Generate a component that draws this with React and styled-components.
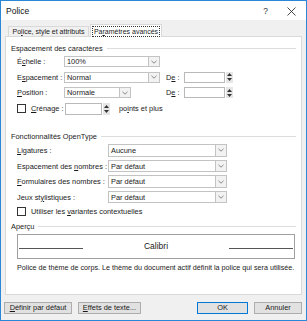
import React from "react";
import styled, { createGlobalStyle } from "styled-components";

const Global = createGlobalStyle`
  html, body { margin: 0; padding: 0; background: #ffffff; }
  * { box-sizing: border-box; }
`;

export default function App() {
  return (
    <>
      <Global />
      <Window>
        <TitleBar>
          <Title>Police</Title>
          <TitleBtns>
            <Help>?</Help>
            <svg width="9" height="9" viewBox="0 0 9 9">
              <path d="M0.5 0.5L8.5 8.5M8.5 0.5L0.5 8.5" stroke="#333" strokeWidth="0.9" />
            </svg>
          </TitleBtns>
        </TitleBar>

        <Tabs>
          <Tab $w={81}>Po<u>l</u>ice, style et attributs</Tab>
          <Tab $w={72} $active>
            <Focus>Pa<u>r</u>amètres avancés</Focus>
          </Tab>
        </Tabs>

        <Panel>
          <Group>Espacement des caractères</Group>
          <Rows $gap={4.6}>
            <Row>
              <Label $w={47}>É<u>c</u>helle :</Label>
              <Combo $w={96}>100%</Combo>
            </Row>
            <Row>
              <Label $w={47}>E<u>s</u>pacement :</Label>
              <Combo $w={96}>Normal</Combo>
              <SideLabel>D<u>e</u> :</SideLabel>
              <Spin $w={49} />
            </Row>
            <Row>
              <Label $w={47}><u>P</u>osition :</Label>
              <Combo $w={67}>Normale</Combo>
              <SideLabel $ml={35}>D<u>e</u> :</SideLabel>
              <Spin $w={49} />
            </Row>
            <Row $h={12}>
              <Check />
              <Label $w={34}><u>C</u>rénage :</Label>
              <Spin $w={45} $h={12} />
              <Text $ml={9}>po<u>i</u>nts et plus</Text>
            </Row>
          </Rows>

          <Group $mt={16.5}>Fonctionnalités OpenType</Group>
          <Rows $gap={3.3}>
            <Row $h={12.3}>
              <Label $w={91}><u>L</u>igatures :</Label>
              <Combo $w={119} $h={12.3}>Aucune</Combo>
            </Row>
            <Row $h={12.3}>
              <Label $w={91}>Espacement des <u>n</u>ombres :</Label>
              <Combo $w={119} $h={12.3}>Par défaut</Combo>
            </Row>
            <Row $h={12.3}>
              <Label $w={91}><u>F</u>ormulaires des nombres :</Label>
              <Combo $w={119} $h={12.3}>Par défaut</Combo>
            </Row>
            <Row $h={12.3}>
              <Label $w={91}>Jeux st<u>y</u>listiques :</Label>
              <Combo $w={119} $h={12.3}>Par défaut</Combo>
            </Row>
            <Row $h={11} $mt={-1}>
              <Check />
              <Text>Utiliser les <u>v</u>ariantes contextuelles</Text>
            </Row>
          </Rows>

          <Group $mt={5}>Aperçu</Group>
          <Preview>
            <Baseline />
            <PreviewText>Calibri</PreviewText>
            <Baseline />
          </Preview>
          <Note>Police de thème de corps. Le thème du document actif définit la police qui sera utilisée.</Note>
        </Panel>

        <Footer>
          <Button $w={68}><u>D</u>éfinir par défaut</Button>
          <Button $w={63}><u>E</u>ffets de texte...</Button>
          <Spacer />
          <Button $w={51} $primary>OK</Button>
          <Button $w={48}>Annuler</Button>
        </Footer>
      </Window>
    </>
  );
}

function Combo({ $w, $h, children }) {
  return (
    <ComboBox $w={$w} $h={$h}>
      <ComboValue>{children}</ComboValue>
      <Drop>
        <svg width="6" height="4" viewBox="0 0 6 4">
          <path d="M0.5 0.8L3 3.2L5.5 0.8" fill="none" stroke="#6d6d6d" strokeWidth="0.8" />
        </svg>
      </Drop>
    </ComboBox>
  );
}

function Spin({ $w, $h }) {
  return (
    <SpinBox $w={$w} $h={$h}>
      <SpinField />
      <Arrows>
        <svg width="5" height="3" viewBox="0 0 5 3"><path d="M0 3L2.5 0L5 3Z" fill="#333" /></svg>
        <svg width="5" height="3" viewBox="0 0 5 3"><path d="M0 0L2.5 3L5 0Z" fill="#333" /></svg>
      </Arrows>
    </SpinBox>
  );
}

const Window = styled.div`
  width: 307px;
  height: 321px;
  border: 1px solid #2b88d8;
  background: #f0f0f0;
  display: flex;
  flex-direction: column;
  font-family: "Liberation Sans", Arial, sans-serif;
  font-size: 7.4px;
  color: #1a1a1a;
  overflow: hidden;
`;

const TitleBar = styled.div`
  height: 19px;
  flex-shrink: 0;
  background: #ffffff;
  display: flex;
  align-items: center;
  justify-content: space-between;
  padding: 1px 10px 0 5px;
`;

const Title = styled.div`
  font-size: 8.5px;
  color: #111;
`;

const TitleBtns = styled.div`
  display: flex;
  align-items: center;
  gap: 19px;
`;

const Help = styled.span`
  font-size: 8.5px;
  color: #333;
`;

const Tabs = styled.div`
  display: flex;
  align-items: flex-end;
  padding: 5px 0 0 7px;
  height: 17px;
  flex-shrink: 0;
  position: relative;
  z-index: 1;
  font-size: 7px;
`;

const Tab = styled.div`
  width: ${p => p.$w}px;
  height: ${p => (p.$active ? "13px" : "11px")};
  display: flex;
  align-items: center;
  justify-content: center;
  background: ${p => (p.$active ? "#ffffff" : "#f0f0f0")};
  border: 1px solid #d9d9d9;
  border-bottom: ${p => (p.$active ? "none" : "1px solid #d9d9d9")};
  margin-right: ${p => (p.$active ? "0" : "1px")};
  white-space: nowrap;
`;

const Focus = styled.span`
  border: 1px dotted #333;
  padding: 0 1px;
  line-height: 9px;
`;

const Panel = styled.div`
  flex: 1;
  margin: -1px 4px 0 4px;
  background: #ffffff;
  border: 1px solid #d9d9d9;
  padding: 6px 5px 0 5px;
  display: flex;
  flex-direction: column;
`;

const Group = styled.div`
  display: flex;
  align-items: center;
  gap: 4px;
  height: 10px;
  flex-shrink: 0;
  margin-top: ${p => p.$mt || 0}px;
  white-space: nowrap;
  &::after {
    content: "";
    flex: 1;
    border-top: 1px solid #dcdcdc;
  }
`;

const Rows = styled.div`
  display: flex;
  flex-direction: column;
  gap: ${p => p.$gap}px;
  padding-left: 6px;
  margin-top: 3px;
  flex-shrink: 0;
`;

const Row = styled.div`
  display: flex;
  align-items: center;
  height: ${p => p.$h || 11}px;
  margin-top: ${p => p.$mt || 0}px;
  flex-shrink: 0;
  white-space: nowrap;
`;

const Label = styled.span`
  width: ${p => p.$w}px;
  flex-shrink: 0;
`;

const SideLabel = styled.span`
  margin-left: ${p => p.$ml || 6}px;
  width: 18px;
`;

const Text = styled.span`
  margin-left: ${p => p.$ml || 0}px;
`;

const ComboBox = styled.div`
  width: ${p => p.$w}px;
  height: ${p => p.$h || 11}px;
  border: 1px solid #c3c3c3;
  background: #ffffff;
  display: flex;
`;

const ComboValue = styled.div`
  flex: 1;
  padding-left: 2px;
  display: flex;
  align-items: center;
`;

const Drop = styled.div`
  width: 11px;
  border-left: 1px solid #c3c3c3;
  background: #f2f2f2;
  display: flex;
  align-items: center;
  justify-content: center;
`;

const SpinBox = styled.div`
  width: ${p => p.$w}px;
  height: ${p => p.$h || 11}px;
  display: flex;
  gap: 1px;
`;

const SpinField = styled.div`
  flex: 1;
  border: 1px solid #b9b9b9;
  background: #fff;
`;

const Arrows = styled.div`
  width: 7px;
  background: #e6e6e6;
  display: flex;
  flex-direction: column;
  align-items: center;
  justify-content: space-evenly;
`;

const Check = styled.span`
  width: 9px;
  height: 9px;
  border: 1px solid #333;
  background: #fff;
  margin-right: 5px;
  flex-shrink: 0;
`;

const Preview = styled.div`
  margin: 2px 1px 0 6px;
  height: 25px;
  flex-shrink: 0;
  border: 1px solid #a0a0a0;
  display: flex;
  align-items: center;
  gap: 4px;
  padding: 0 1px;
`;

const Baseline = styled.div`
  width: 64px;
  border-top: 1px solid #555;
  margin-top: 4px;
`;

const PreviewText = styled.div`
  flex: 1;
  text-align: center;
  font-size: 8.5px;
`;

const Note = styled.div`
  margin: 4px 0 0 6px;
  font-size: 7.2px;
  white-space: nowrap;
`;

const Footer = styled.div`
  height: 25px;
  flex-shrink: 0;
  display: flex;
  align-items: center;
  gap: 6px;
  padding: 0 4px 0 3px;
`;

const Spacer = styled.div`
  flex: 1;
`;

const Button = styled.div`
  width: ${p => p.$w}px;
  height: 12px;
  display: flex;
  align-items: center;
  justify-content: center;
  background: #e1e1e1;
  border: 1px solid ${p => (p.$primary ? "#0078d7" : "#adadad")};
  white-space: nowrap;
`;
